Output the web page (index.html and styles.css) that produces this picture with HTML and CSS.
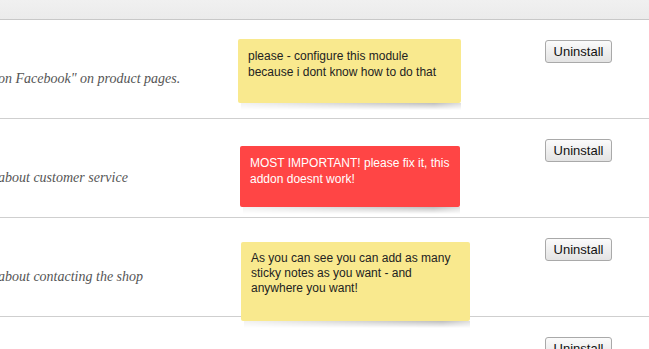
FILE: index.html
```html
<!DOCTYPE html>
<html lang="en">
<head>
    <meta charset="UTF-8">
    <title>Modules</title>
    <link rel="stylesheet" href="styles.css">
</head>
<body>
    <div class="board">
        <div class="toolbar"></div>

        <!-- module list -->
        <div class="module">
            <div class="module-desc"><p>on Facebook" on product pages.</p></div>
            <div class="module-action"><button class="btn">Uninstall</button></div>
        </div>
        <div class="module">
            <div class="module-desc"><p>about customer service</p></div>
            <div class="module-action"><button class="btn">Uninstall</button></div>
        </div>
        <div class="module">
            <div class="module-desc"><p>about contacting the shop</p></div>
            <div class="module-action"><button class="btn">Uninstall</button></div>
        </div>
        <div class="module">
            <div class="module-desc"><p></p></div>
            <div class="module-action"><button class="btn">Uninstall</button></div>
        </div>

        <!-- sticky notes -->
        <div class="note note-one">please - configure this module because i dont know how to do that</div>
        <div class="note note-red note-two">MOST IMPORTANT! please fix it, this addon doesnt work!</div>
        <div class="note note-three">As you can see you can add as many sticky notes as you want - and anywhere you want!</div>
    </div>
</body>
</html>
```

FILE: styles.css
```css
body {
    margin: 0;
    padding: 0;
    background: #fff;
    font-family: "Liberation Sans", Arial, sans-serif;
    overflow: hidden;
}

.board {
    position: relative;
    width: 649px;
    height: 349px;
    overflow: hidden;
}

.toolbar {
    height: 19px;
    background: linear-gradient(#f0f0f0, #ebebeb);
    border-bottom: 1px solid #c8c8c8;
}

.module {
    display: flex;
    height: 98px;
    border-bottom: 1px solid #cfcfcf;
}

.module-desc {
    width: 545px;
}

.module-desc p {
    margin: 51px 0 0 -2px;
    font-family: "Liberation Serif", Georgia, serif;
    font-style: italic;
    font-size: 14px;
    color: #555;
}

.module-action {
    padding-top: 20px;
}

.btn {
    height: 23px;
    width: 67px;
    padding: 0;
    font-family: "Liberation Sans", Arial, sans-serif;
    font-size: 13px;
    color: #111;
    background: linear-gradient(#fbfbfb, #e3e3e3);
    border: 1px solid #a9a9a9;
    border-radius: 3px;
}

.note {
    position: absolute;
    box-sizing: border-box;
    padding: 9px 10px;
    font-size: 12px;
    line-height: 16px;
    color: #222;
    background: #f9e98e;
    border-radius: 2px;
}

.note::after {
    content: "";
    position: absolute;
    left: 3px;
    right: 0;
    bottom: -7px;
    height: 7px;
    background: linear-gradient(rgba(0, 0, 0, 0.26), rgba(0, 0, 0, 0));
    -webkit-mask-image: linear-gradient(to right, rgba(0, 0, 0, 0.2), #000 88%, rgba(0, 0, 0, 0.5));
    mask-image: linear-gradient(to right, rgba(0, 0, 0, 0.2), #000 88%, rgba(0, 0, 0, 0.5));
}

.note-red {
    background: #ff4545;
    color: #fff;
}

.note-one {
    left: 238px;
    top: 39px;
    width: 223px;
    height: 64px;
}

.note-two {
    left: 240px;
    top: 146px;
    width: 220px;
    height: 61px;
}

.note-three {
    left: 241px;
    top: 242px;
    width: 229px;
    height: 79px;
    line-height: 15px;
}
```
